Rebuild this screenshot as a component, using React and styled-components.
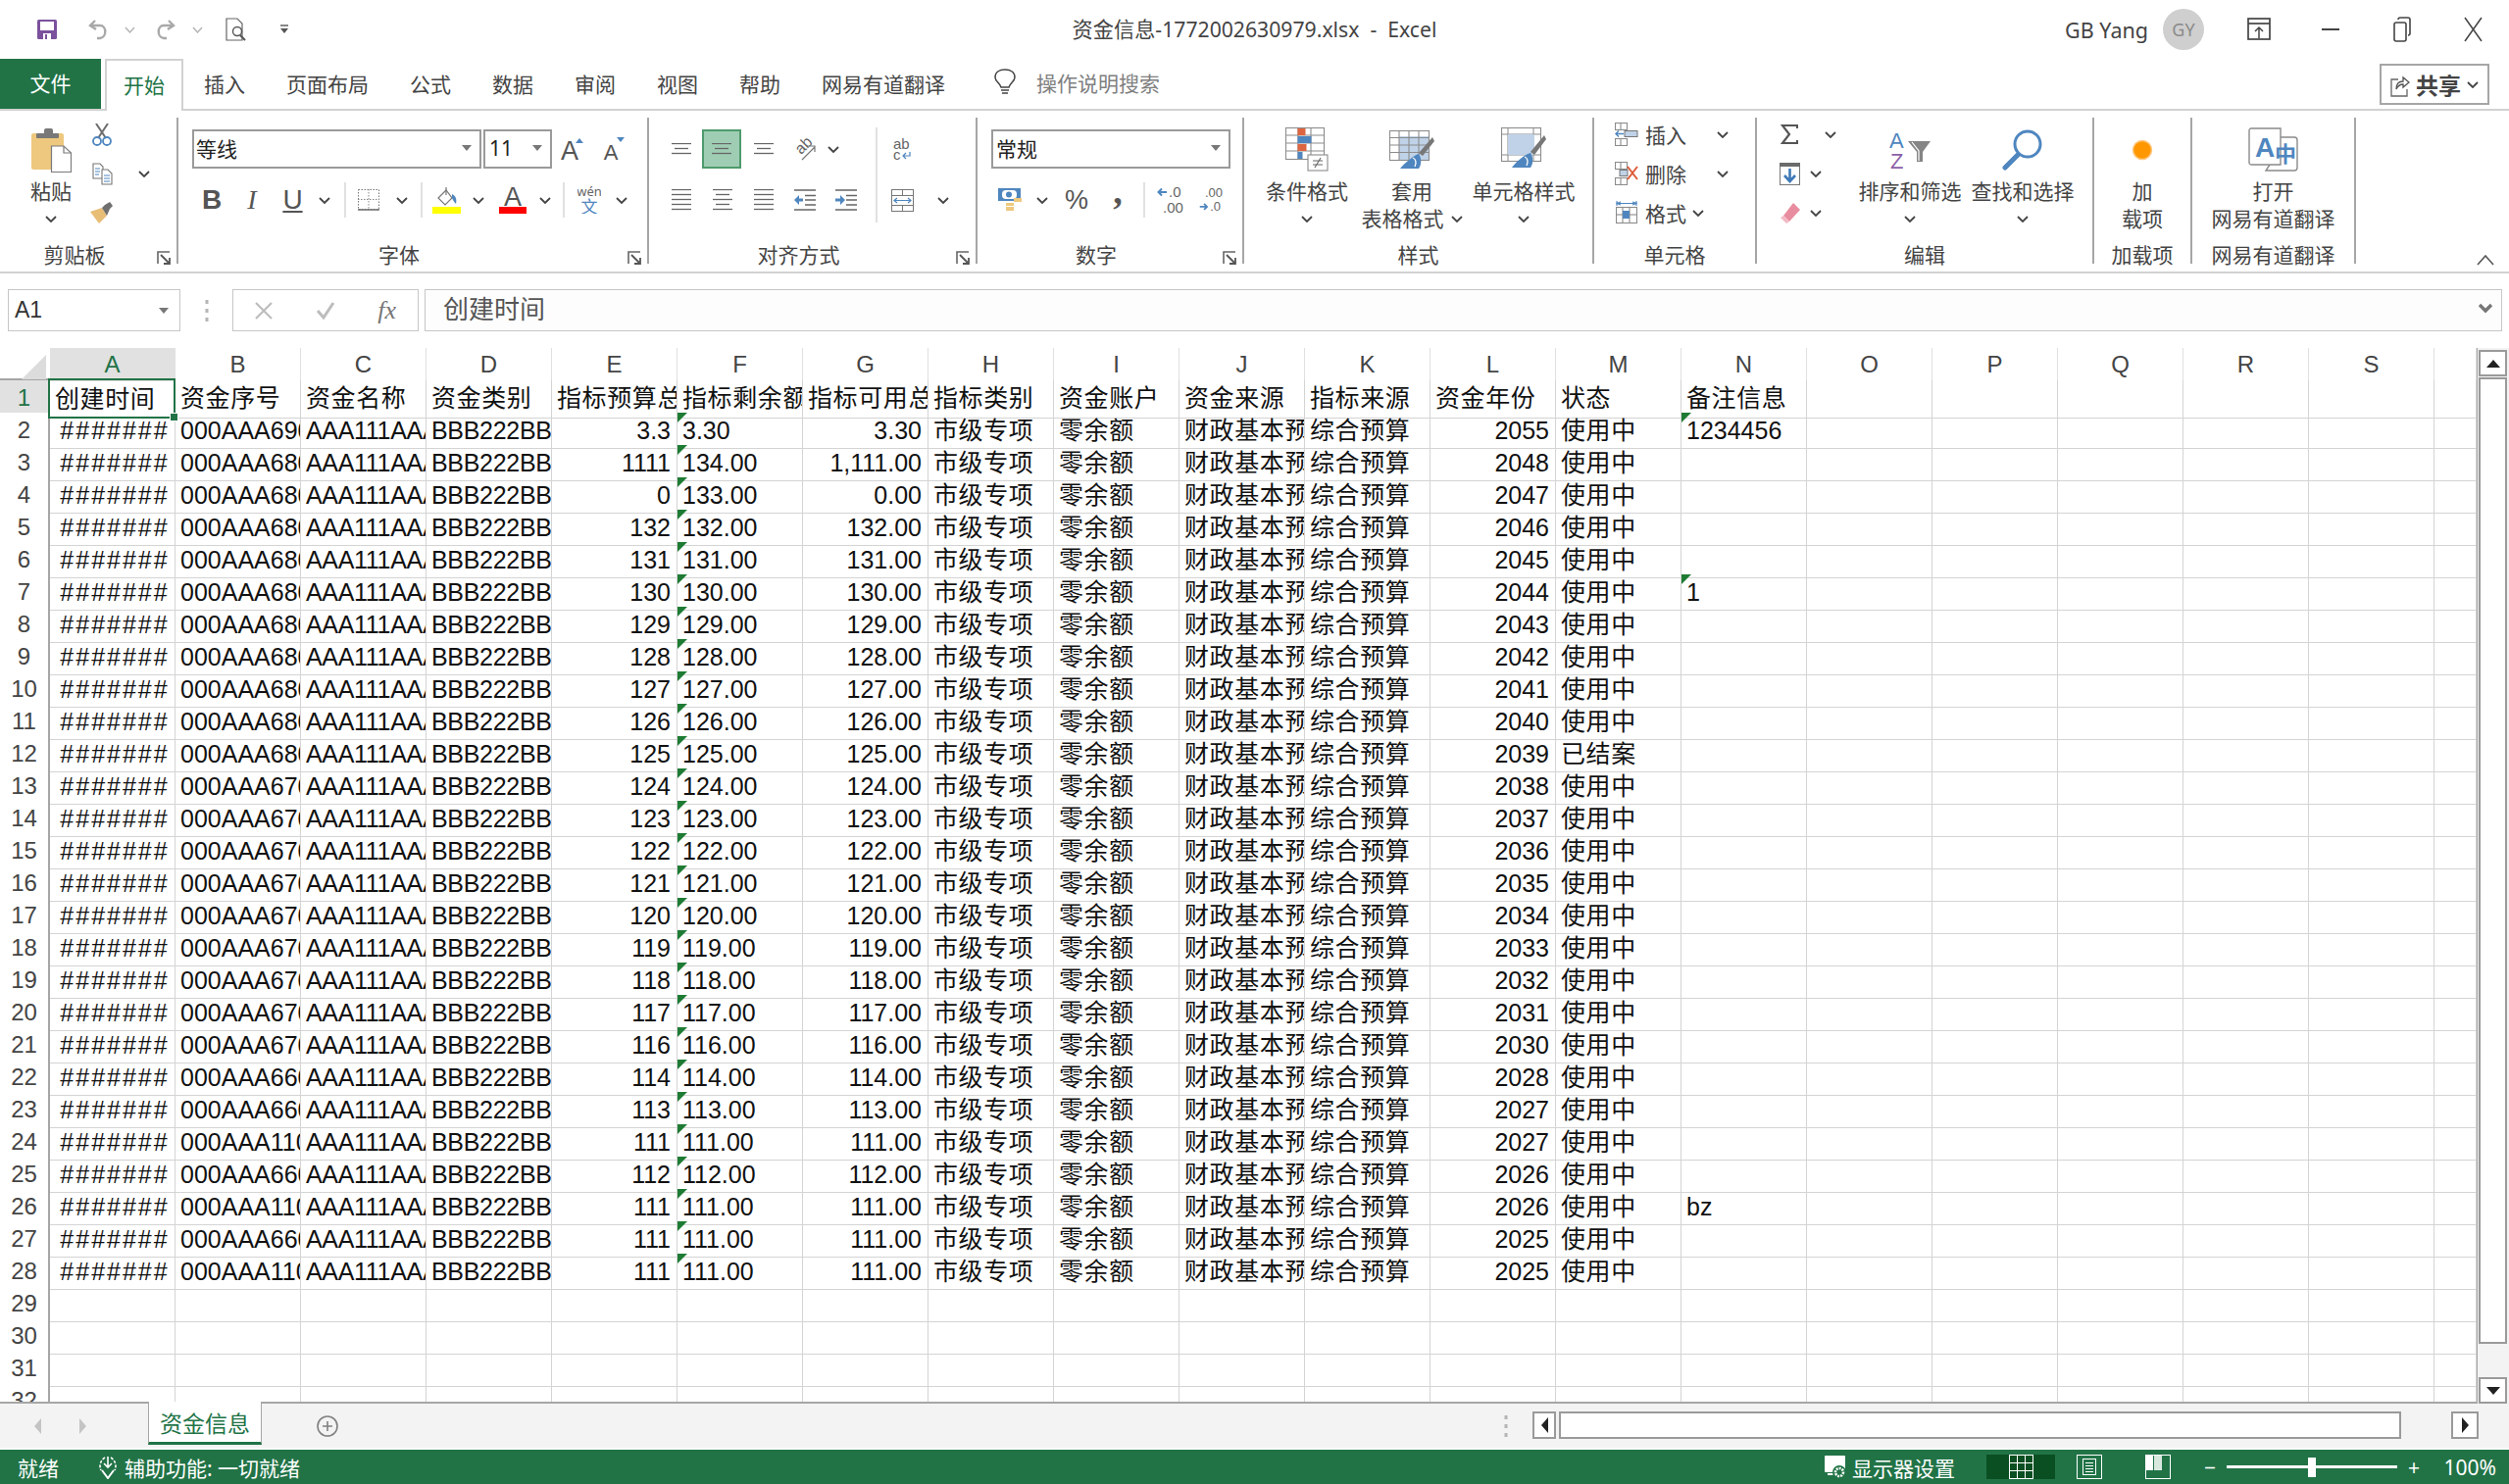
import React from 'react';
import styled, { createGlobalStyle } from 'styled-components';

const UI_FONT = `"Noto Sans", "Noto Sans CJK SC", sans-serif`;
const CELL_FONT = `"Liberation Sans", "Noto Sans CJK SC", sans-serif`;
const GREEN = '#217346';

const Global = createGlobalStyle`
  html, body { margin: 0; padding: 0; background: #fff; overflow: hidden; }
  * { box-sizing: border-box; }
`;

const Window = styled.div`
  width: 2559px;
  height: 1514px;
  display: flex;
  flex-direction: column;
  font-family: ${UI_FONT};
  font-size: 21px;
  color: #444;
  overflow: hidden;
`;

/* title bar */
const TitleBar = styled.div`
  height: 60px;
  display: grid;
  grid-template-columns: 1fr auto 1fr;
  align-items: center;
`;
const Qat = styled.div`
  display: flex;
  align-items: center;
  padding-left: 38px;
`;
const QatSlot = styled.div`
  width: ${p => p.$w}px;
  margin-left: ${p => p.$ml || 0}px;
  display: flex;
  justify-content: center;
`;
const DocTitle = styled.div`
  font-size: 21.2px;
  white-space: pre;
  color: #444;
  padding-bottom: 4px;
`;
const Account = styled.div`
  display: flex;
  align-items: center;
  justify-content: flex-end;
`;
const UserName = styled.span`
  font-size: 21.5px;
  margin-right: 15px;
`;
const Avatar = styled.div`
  width: 42px;
  height: 42px;
  border-radius: 50%;
  background: #cfcfcf;
  color: #8a8a8a;
  font-size: 18px;
  display: flex;
  align-items: center;
  justify-content: center;
  margin-right: 19px;
`;
const WinBtn = styled.div`
  width: 73px;
  height: 50px;
  display: flex;
  align-items: center;
  justify-content: center;
`;

/* tabs */
const TabRow = styled.div`
  height: 53px;
  display: flex;
  align-items: stretch;
  border-bottom: 2px solid #d2d2d2;
`;
const FileTab = styled.div`
  width: 103px;
  height: 51px;
  background: ${GREEN};
  color: #fff;
  display: flex;
  align-items: center;
  justify-content: center;
  padding-bottom: 3px;
  margin-right: 4px;
`;
const Tab = styled.div`
  padding: 0 21px 3px;
  height: 53px;
  display: flex;
  align-items: center;
  white-space: nowrap;
  ${p => p.$active && `
    width: 80px;
    padding: 0 0 3px;
    justify-content: center;
    color: ${GREEN};
    background: #fff;
    border: 2px solid #d2d2d2;
    border-bottom: 0;
  `}
`;
const Tell = styled.div`
  display: flex;
  align-items: center;
  gap: 21px;
  margin-left: 29px;
  color: #808080;
  padding-bottom: 3px;
`;
const ShareBtn = styled.div`
  margin-left: auto;
  margin-right: 20px;
  margin-top: 5px;
  width: 112px;
  height: 42px;
  border: 2px solid #a6a6a6;
  display: flex;
  align-items: center;
  justify-content: center;
  gap: 6px;
  font-weight: 700;
  font-size: 23px;
  color: #444;
`;

/* ribbon */
const Ribbon = styled.div`
  height: 166px;
  display: flex;
  padding-top: 7px;
  border-bottom: 2px solid #d2d2d2;
`;
const Group = styled.section`
  width: ${p => p.$w}px;
  height: 149px;
  border-right: 2px solid #a6a6a6;
  display: flex;
  flex-direction: column;
`;
const GroupBody = styled.div`
  height: 126px;
  flex: none;
  display: flex;
  padding-left: ${p => p.$pad || 0}px;
`;
const GroupFooter = styled.div`
  height: 28px;
  flex: none;
  line-height: 28px;
  display: flex;
  white-space: nowrap;
`;
const FooterLabel = styled.div`
  flex: 1;
  text-align: center;
`;
const Launcher = styled.div`
  width: 28px;
  display: flex;
  align-items: center;
  padding-left: 8px;
  padding-top: 6px;
`;
const Collapse = styled.div`
  flex: 1;
  display: flex;
  align-items: flex-end;
  justify-content: flex-end;
  padding: 0 15px 6px 0;
`;
const Stack = styled.div`
  display: flex;
  flex-direction: column;
  width: ${p => (p.$w ? `${p.$w}px` : 'auto')};
  margin-left: ${p => p.$ml || 0}px;
`;
const ToolRow = styled.div`
  display: flex;
  align-items: center;
  height: ${p => p.$h || 40}px;
  margin-top: ${p => p.$top || 0}px;
`;
const Slot = styled.div`
  width: ${p => p.$w}px;
  height: 100%;
  flex: none;
  display: flex;
  justify-content: center;
  align-items: center;
`;
const ActiveSlot = styled(Slot)`
  background: #9fcdb3;
  border: 2px solid #4e9a6c;
  margin-right: 2px;
`;
const Combo = styled.div`
  width: ${p => p.$w}px;
  height: 40px;
  margin-right: ${p => p.$mr || 0}px;
  border: 2px solid #9a9a9a;
  display: flex;
  align-items: center;
  justify-content: space-between;
  padding: 0 8px 2px ${p => p.$pl}px;
  font-size: 21px;
  color: #222;
`;
const Caret = styled.span`
  width: 0;
  height: 0;
  border-left: 5px solid transparent;
  border-right: 5px solid transparent;
  border-top: 6px solid #777;
`;
const Sep = styled.div`
  width: 2px;
  height: 36px;
  flex: none;
  background: #e1e1e1;
  margin-left: ${p => p.$ml || 0}px;
`;
const TallSep = styled(Sep)`
  height: 97px;
  margin-top: 10px;
`;
const Glyph = styled.span`
  font-family: "Liberation Serif", serif;
  font-size: 28px;
  color: #555;
  font-weight: ${p => (p.$b ? 700 : 400)};
  font-style: ${p => (p.$i ? 'italic' : 'normal')};
  text-decoration: ${p => (p.$u ? 'underline' : 'none')};
  line-height: 1;
`;
const SansGlyph = styled(Glyph)`
  font-family: "Liberation Sans", sans-serif;
  font-size: ${p => p.$size || 28}px;
`;
const CommaGlyph = styled(Glyph)`
  font-size: 38px;
  transform: translateY(-9px);
`;
const BigButton = styled.div`
  width: ${p => p.$w}px;
  flex: none;
  display: flex;
  flex-direction: column;
  align-items: center;
  padding-top: 10px;
`;
const BigIcon = styled.div`
  height: 46px;
  display: flex;
  align-items: center;
  justify-content: center;
  margin-bottom: 5px;
`;
const BigLine = styled.div`
  height: 28px;
  line-height: 28px;
  display: flex;
  align-items: center;
  gap: 7px;
  white-space: nowrap;
`;
const CellAction = styled.div`
  display: flex;
  align-items: center;
  height: 34px;
  margin-bottom: 6px;
`;
const ActionIcon = styled.div`
  width: ${p => p.$w || 26}px;
  display: flex;
  justify-content: center;
  margin-right: ${p => p.$mr ?? 6}px;
`;
const ActionChevron = styled.div`
  margin-left: ${p => p.$ml}px;
  display: flex;
`;

/* formula bar */
const FormulaBar = styled.div`
  height: 76px;
  padding: 16px 7px 17px 8px;
  display: flex;
  align-items: stretch;
`;
const NameBox = styled.div`
  width: 176px;
  border: 1.5px solid #c6c6c6;
  display: flex;
  align-items: center;
  justify-content: space-between;
  padding: 0 11px 0 6px;
  font-family: ${CELL_FONT};
  font-size: 23px;
  color: #333;
`;
const Grip = styled.div`
  width: 53px;
  display: flex;
  align-items: center;
  justify-content: center;
`;
const FxBox = styled.div`
  width: 190px;
  border: 1.5px solid #c6c6c6;
  display: flex;
  align-items: center;
  justify-content: space-between;
  padding: 0 22px;
  margin-right: 6px;
  color: #bbb;
`;
const FxText = styled.span`
  font-family: "Liberation Serif", serif;
  font-style: italic;
  font-size: 26px;
  color: #777;
`;
const FormulaInput = styled.div`
  flex: 1;
  border: 1.5px solid #c6c6c6;
  background: #fdfdfd;
  display: flex;
  align-items: center;
  justify-content: space-between;
  padding: 0 8px 5px 18px;
  font-size: 26px;
  color: #555;
`;

/* sheet */
const Main = styled.div`
  flex: 1;
  min-height: 0;
  display: flex;
`;
const Sheet = styled.div`
  width: 2527px;
  height: 1077px;
  overflow: hidden;
  border-bottom: 2px solid #a6a6a6;
  border-right: 1px solid #a6a6a6;
  font-family: ${CELL_FONT};
  font-size: 25px;
  color: #111;
`;
const HeaderRow = styled.div`
  display: grid;
  grid-template-columns: 51px repeat(19, 128px) 1fr;
  height: 33px;
  border-bottom: 2px solid #a6a6a6;
`;
const Corner = styled.div`
  display: flex;
  align-items: flex-end;
  justify-content: flex-end;
  padding: 0 4px 2px 0;
`;
const ColHead = styled.div`
  border-right: 1px solid #e0e0e0;
  text-align: center;
  line-height: 34px;
  font-size: 24px;
  color: ${p => (p.$active ? GREEN : '#444')};
  background: ${p => (p.$active ? '#e1e1e1' : '#fff')};
`;
const SheetRow = styled.div`
  display: grid;
  grid-template-columns: 51px repeat(19, 128px) 1fr;
  height: 33px;
`;
const RowHead = styled.div`
  border-right: 2px solid #a6a6a6;
  border-bottom: 1px solid #e8e8e8;
  text-align: center;
  line-height: 36px;
  font-size: 24px;
  color: ${p => (p.$active ? GREEN : '#444')};
  background: ${p => (p.$active ? '#e1e1e1' : '#fff')};
`;
const Cell = styled.div`
  position: relative;
  border-right: 1px solid #d4d4d4;
  border-bottom: 1px solid #d4d4d4;
  padding: 0 ${p => (p.$align === 'right' ? 6 : 0)}px 0 ${p => (p.$align === 'right' ? 0 : 5)}px;
  text-align: ${p => p.$align || 'left'};
  line-height: 37px;
  letter-spacing: ${p => p.$track || 0}px;
  white-space: nowrap;
  overflow: hidden;
`;
const Selected = styled(Cell)`
  overflow: visible;
  line-height: 38px;
`;
const SelectionBox = styled.div`
  position: absolute;
  left: -2px;
  right: -1px;
  top: -2px;
  bottom: -1px;
  border: 2.5px solid ${GREEN};
  z-index: 2;
`;
const FillHandle = styled.div`
  position: absolute;
  right: -5px;
  bottom: -5px;
  width: 9px;
  height: 9px;
  background: ${GREEN};
  border: 1px solid #fff;
`;
const ErrorFlag = styled.div`
  position: absolute;
  left: 0;
  top: 0;
  width: 10px;
  height: 10px;
  background: #1e7b34;
  clip-path: polygon(0 0, 100% 0, 0 100%);
`;
const VScroll = styled.div`
  width: 32px;
  background: #f3f3f3;
  display: flex;
  flex-direction: column;
  padding: 2px 2px 0 1px;
`;
const ArrowBtn = styled.div`
  width: 29px;
  height: 27px;
  flex: none;
  background: #fff;
  border: 2.5px solid #9a9a9a;
  display: flex;
  align-items: center;
  justify-content: center;
`;
const VThumb = styled.div`
  height: 986px;
  flex: none;
  margin: 1px 0 auto;
  background: #fff;
  border: 2.5px solid #9a9a9a;
`;
const Triangle = styled.span`
  width: 0;
  height: 0;
  border-left: 7px solid transparent;
  border-right: 7px solid transparent;
  ${p => (p.$dir === 'up' ? 'border-bottom: 8px solid #222;' : 'border-top: 8px solid #222;')}
`;
const SideTriangle = styled.span`
  width: 0;
  height: 0;
  border-top: 8px solid transparent;
  border-bottom: 8px solid transparent;
  ${p => (p.$dir === 'left'
    ? `border-right: 7px solid ${p.$color || '#222'};`
    : `border-left: 7px solid ${p.$color || '#222'};`)}
`;

/* sheet tabs */
const SheetBar = styled.div`
  height: 45px;
  flex: none;
  background: #f3f3f3;
  display: flex;
  align-items: flex-start;
  margin-bottom: 2px;
`;
const SheetNav = styled.div`
  width: 151px;
  height: 45px;
  display: flex;
  align-items: center;
  gap: 39px;
  padding-left: 35px;
`;
const SheetTab = styled.div`
  width: 116px;
  height: 44px;
  margin-top: -2px;
  background: #fff;
  border-left: 1.5px solid #a6a6a6;
  border-right: 1.5px solid #a6a6a6;
  border-bottom: 3px solid ${GREEN};
  color: ${GREEN};
  font-size: 23px;
  display: flex;
  align-items: center;
  justify-content: center;
`;
const AddSheet = styled.div`
  margin: 12px auto 0 56px;
  display: flex;
`;
const DotsSlot = styled.div`
  height: 45px;
  display: flex;
  align-items: center;
  margin-right: 25px;
`;
const HScroll = styled.div`
  width: 965px;
  height: 28px;
  margin: 8px 31px 0 0;
  display: flex;
  align-items: stretch;
`;
const HBtn = styled(ArrowBtn)`
  width: ${p => p.$w}px;
  height: 28px;
`;
const HThumb = styled.div`
  width: 859px;
  margin-left: 3px;
  background: #fff;
  border: 2.5px solid #9a9a9a;
  margin-right: auto;
`;

/* status bar */
const StatusBar = styled.div`
  height: 35px;
  flex: none;
  background: ${GREEN};
  color: #fff;
  display: flex;
  align-items: stretch;
  font-size: 21px;
  padding: 0 13px 0 18px;
`;
const StatusItem = styled.div`
  display: flex;
  align-items: center;
  gap: ${p => p.$gap || 0}px;
  margin-left: ${p => p.$ml || 0}px;
  white-space: nowrap;
`;
const StatusRight = styled(StatusItem)`
  margin-left: auto;
`;
const ViewBtn = styled.div`
  width: 70px;
  display: flex;
  align-items: center;
  justify-content: center;
  background: ${p => (p.$active ? '#0a4f22' : 'transparent')};
`;
const ZoomSign = styled.span`
  width: 14px;
  text-align: center;
`;
const ZoomTrack = styled.div`
  width: 174px;
  height: 3px;
  background: #fff;
  display: flex;
  align-items: center;
  justify-content: center;
  margin: 0 10px;
`;
const ZoomThumb = styled.div`
  width: 8px;
  height: 20px;
  background: #fff;
  flex: none;
`;
const ZoomValue = styled.div`
  width: 54px;
  margin-left: 23px;
  display: flex;
  align-items: center;
  justify-content: flex-end;
`;

/* icons */
const Ico = ({ w, h, children }) => (
  <svg width={w} height={h} viewBox={`0 0 ${w} ${h}`} fill="none">{children}</svg>
);
const Chev = () => (
  <Ico w={12} h={7}><polyline points="1,1 6,6 11,1" stroke="#444" strokeWidth="1.8" /></Ico>
);
const Launch = () => (
  <Ico w={15} h={15}>
    <path d="M13 1H1V13" stroke="#666" strokeWidth="1.6" />
    <path d="M4 4L13 13M13 7V13H7" stroke="#555" strokeWidth="1.8" />
  </Ico>
);
const LINE = '#666';
const Lines = ({ w = 20, ys, inset = [] }) => (
  <Ico w={w} h={Math.max(...ys) + 2}>
    {ys.map((y, i) => (
      <line key={y} x1={inset[i] || 0} x2={w - (inset[i] || 0)} y1={y + 0.5} y2={y + 0.5} stroke={LINE} strokeWidth="1.3" />
    ))}
  </Ico>
);
const SaveIcon = () => (
  <Ico w={20} h={20}>
    <rect width="20" height="20" rx="1.5" fill="#7b519d" />
    <rect x="3" y="2" width="14" height="9" fill="#fff" />
    <rect x="6" y="14" width="8" height="6" fill="#fff" />
    <rect x="8" y="15" width="2" height="5" fill="#7b519d" />
  </Ico>
);
const UndoIcon = ({ flip }) => (
  <Ico w={22} h={22}>
    <g transform={flip ? 'translate(22 0) scale(-1 1)' : undefined}>
      <path d="M8 2L3 7L9 11" stroke="#a9a9a9" strokeWidth="2.4" />
      <path d="M3 7H13C20 7 20 19 13 20H10" stroke="#a9a9a9" strokeWidth="2.4" />
    </g>
  </Ico>
);
const SmallChev = () => (
  <Ico w={11} h={7}><polyline points="1,1 5.5,6 10,1" stroke="#b5b5b5" strokeWidth="1.5" /></Ico>
);
const PreviewIcon = () => (
  <Ico w={23} h={24}>
    <path d="M1 1H12L17 6V23H1Z" stroke="#666" strokeWidth="1.2" />
    <circle cx="12" cy="14" r="4.5" stroke="#555" strokeWidth="1.4" />
    <line x1="15" y1="18" x2="20" y2="23" stroke="#555" strokeWidth="2" />
  </Ico>
);
const MoreIcon = () => (
  <Ico w={10} h={10}>
    <line x1="1" x2="9" y1="1" y2="1" stroke="#555" strokeWidth="1.4" />
    <path d="M1 4H9L5 9Z" fill="#555" />
  </Ico>
);
const BulbIcon = () => (
  <Ico w={22} h={28}>
    <path d="M7 19C6 15 1 13 1 9C1 4 5 1 11 1C17 1 21 4 21 9C21 13 16 15 15 19Z" stroke="#444" strokeWidth="1.5" />
    <path d="M7 22H15M8 25H14" stroke="#444" strokeWidth="1.6" />
  </Ico>
);
const ShareIcon = () => (
  <Ico w={20} h={25}>
    <path d="M8 7H1V24H17V17" stroke="#666" strokeWidth="1.3" />
    <path d="M6 17C6 11 9 9 13 9V5L19 10L13 15V12C10 12 8 13 6 17Z" stroke="#555" strokeWidth="1.3" />
  </Ico>
);
const RibbonOptsIcon = () => (
  <Ico w={24} h={24}>
    <rect x="1" y="1" width="22" height="21" stroke="#444" strokeWidth="1.7" />
    <line x1="1" x2="23" y1="6" y2="6" stroke="#444" strokeWidth="1.7" />
    <path d="M12 21V10M8 14L12 10L16 14" stroke="#444" strokeWidth="1.5" />
  </Ico>
);
const MinIcon = () => <Ico w={18} h={4}><line x1="0" x2="18" y1="2" y2="2" stroke="#444" strokeWidth="2" /></Ico>;
const RestoreIcon = () => (
  <Ico w={18} h={26}>
    <rect x="1" y="6" width="12" height="19" rx="2" stroke="#444" strokeWidth="1.6" />
    <path d="M5 3C5 1.5 6 1 7 1H15C16 1 17 2 17 3V17C17 18.5 16 19 15 19" stroke="#444" strokeWidth="1.6" />
  </Ico>
);
const CloseIcon = () => <Ico w={19} h={26}><path d="M1 1L18 25M18 1L1 25" stroke="#444" strokeWidth="1.5" /></Ico>;

const PasteIcon = () => (
  <Ico w={41} h={45}>
    <rect x="0" y="5" width="33" height="37" rx="2" fill="#edc87e" />
    <rect x="5" y="5" width="23" height="5" rx="1" fill="#787878" />
    <rect x="13" y="0" width="9" height="7" rx="2" fill="#787878" />
    <path d="M20.5 18H33L40.5 25V44.5H20.5Z" fill="#fff" stroke="#7a7a7a" strokeWidth="1.2" />
    <path d="M33 18V25H40.5" stroke="#7a7a7a" strokeWidth="1.2" />
  </Ico>
);
const CutIcon = () => (
  <Ico w={20} h={23}>
    <path d="M4 0L14 15M16 0L6 15" stroke="#6d6d6d" strokeWidth="2" />
    <circle cx="5" cy="18" r="4" stroke="#4f86bf" strokeWidth="1.8" />
    <circle cx="15" cy="18" r="4" stroke="#4f86bf" strokeWidth="1.8" />
  </Ico>
);
const CopyIcon = () => (
  <Ico w={21} h={23}>
    <path d="M1 1H8L11 4V16H1Z" fill="#fff" stroke="#777" strokeWidth="1.1" />
    <path d="M3 6H8M3 9H8M3 12H7" stroke="#4f86bf" strokeWidth="1.2" />
    <path d="M10 7H16L20 11V22H10Z" fill="#fff" stroke="#777" strokeWidth="1.1" />
    <path d="M12 13H18M12 16H18M12 19H18" stroke="#4f86bf" strokeWidth="1.2" />
  </Ico>
);
const BrushIcon = () => (
  <Ico w={24} h={22}>
    <path d="M0 10L12 6L17 14L9 22Z" fill="#e8bd76" />
    <path d="M12 6L15 3L20 0L23 4L20 7L17 14Z" fill="#6f6f6f" />
  </Ico>
);
const BorderIcon = () => (
  <Ico w={22} h={22}>
    <rect x="0.5" y="0.5" width="21" height="20" stroke="#777" strokeWidth="1" strokeDasharray="1.5 1.5" />
    <path d="M11 0V21M0 10.5H22" stroke="#888" strokeWidth="1" strokeDasharray="1.5 1.5" />
    <line x1="0" x2="22" y1="21" y2="21" stroke="#666" strokeWidth="1.4" />
  </Ico>
);
const FillIcon = () => (
  <Ico w={29} h={27}>
    <path d="M14 3L6 11L13 18L20 11Z" fill="#fff" stroke="#777" strokeWidth="1.2" />
    <path d="M14 0V8" stroke="#777" strokeWidth="1.2" />
    <path d="M20 7C24 9 25 12 24 17C22 15 21 13 20 11Z" fill="#4f86bf" />
    <rect x="0" y="20" width="29" height="7" fill="#ffff00" />
  </Ico>
);
const FontColorIcon = () => (
  <Ico w={28} h={28}>
    <text x="14" y="20" textAnchor="middle" fontFamily="Liberation Sans" fontSize="27" fill="#555">A</text>
    <rect x="0" y="21" width="28" height="7" fill="#ff0000" />
  </Ico>
);
const WenIcon = () => (
  <Ico w={24} h={28}>
    <text x="12" y="10" textAnchor="middle" fontFamily="Noto Sans" fontSize="13" fill="#666">wén</text>
    <text x="12" y="27" textAnchor="middle" fontFamily="Noto Sans CJK SC" fontSize="17" fill="#4f86bf">文</text>
  </Ico>
);
const GrowIcon = ({ down, size }) => (
  <Ico w={24} h={30}>
    <text x="9" y="26" textAnchor="middle" fontFamily="Liberation Sans" fontSize={size} fill="#555">A</text>
    {down
      ? <path d="M15 3H23L19 8Z" fill="#4f86bf" />
      : <path d="M15 9H23L19 4Z" fill="#4f86bf" />}
  </Ico>
);
const OrientIcon = () => (
  <Ico w={24} h={24}>
    <text x="4" y="15" transform="rotate(-45 10 12)" fontFamily="Liberation Sans" fontSize="16" fill="#666">ab</text>
    <path d="M9 23L22 10M16 9H22V15" stroke="#777" strokeWidth="1.2" />
  </Ico>
);
const IndentIcon = ({ right }) => (
  <Ico w={22} h={22}>
    <path d="M0 1H22M11 6.5H22M11 11H22M11 16H22M0 21H22" stroke={LINE} strokeWidth="1.3" />
    {right
      ? <path d="M0 9.5H5V6L10 11L5 16V12.5H0Z" fill="#4f86bf" />
      : <path d="M9 9.5H5V6L0 11L5 16V12.5H9Z" fill="#4f86bf" />}
  </Ico>
);
const WrapIcon = () => (
  <Ico w={20} h={23}>
    <text x="1" y="11" fontFamily="Liberation Sans" fontSize="15" fill="#666">ab</text>
    <text x="1" y="22" fontFamily="Liberation Sans" fontSize="15" fill="#666">c</text>
    <path d="M18 14V18H11M14 15L11 18L14 21" stroke="#4f86bf" strokeWidth="1.2" />
  </Ico>
);
const MergeIcon = () => (
  <Ico w={23} h={23}>
    <rect x="0.5" y="0.5" width="22" height="22" stroke="#777" strokeWidth="1" />
    <path d="M0 6.5H23M0 16.5H23M11.5 0V6.5M11.5 16.5V23" stroke="#777" strokeWidth="1" />
    <path d="M3 11.5H20M6 9L3 11.5L6 14M17 9L20 11.5L17 14" stroke="#4f86bf" strokeWidth="1.2" />
  </Ico>
);
const CurrencyIcon = () => (
  <Ico w={24} h={24}>
    <rect x="0" y="0" width="23" height="13" fill="#4f86bf" />
    <rect x="4" y="2" width="15" height="9" rx="4" fill="#fff" />
    <circle cx="11" cy="6.5" r="3" fill="#4f86bf" />
    <path d="M16 10H24V14H16ZM8 15H16V18H8ZM8 19H16V23H8Z" fill="#edc87e" />
  </Ico>
);
const IncDecIcon = ({ inc }) => (
  <Ico w={30} h={30}>
    <text x={inc ? 12 : 8} y="12" fontFamily="Liberation Sans" fontSize="15" fill="#666">{inc ? '.0' : '.00'}</text>
    <text x={inc ? 6 : 14} y="28" fontFamily="Liberation Sans" fontSize="15" fill="#666">{inc ? '.00' : '.0'}</text>
    {inc
      ? <path d="M10 7H2M5 3.5L1.5 7L5 10.5" stroke="#4f86bf" strokeWidth="2" />
      : <path d="M2 23H10M7 19.5L10.5 23L7 26.5" stroke="#4f86bf" strokeWidth="2" />}
  </Ico>
);
const GridBase = ({ x0 = 0, y0 = 0, w, h, cols, rows }) => (
  <g stroke="#8b8b8b" strokeWidth="1.1">
    <rect x={x0 + 0.5} y={y0 + 0.5} width={w} height={h} />
    {Array.from({ length: cols - 1 }, (_, i) => {
      const x = x0 + ((i + 1) * w) / cols;
      return <line key={`c${i}`} x1={x} x2={x} y1={y0} y2={y0 + h} />;
    })}
    {Array.from({ length: rows - 1 }, (_, i) => {
      const y = y0 + ((i + 1) * h) / rows;
      return <line key={`r${i}`} y1={y} y2={y} x1={x0} x2={x0 + w} />;
    })}
  </g>
);
const CondIcon = () => (
  <Ico w={44} h={46}>
    <GridBase w={39} h={32} cols={3} rows={4} />
    <rect x="12.5" y="1" width="8" height="7" fill="#dd6540" />
    <rect x="12.5" y="9" width="14" height="7" fill="#4f86bf" />
    <rect x="12.5" y="17" width="9" height="7" fill="#dd6540" />
    <rect x="12.5" y="25" width="5" height="7" fill="#4f86bf" />
    <rect x="23" y="28" width="20" height="16" fill="#fff" stroke="#8b8b8b" strokeWidth="1.1" />
    <path d="M28 34H38M28 38H38M36 31L30 41" stroke="#666" strokeWidth="1.1" />
  </Ico>
);
const TableStyleIcon = () => (
  <Ico w={46} h={46}>
    <rect x="10" y="9" width="30" height="24" fill="#bfd2e7" />
    <GridBase y0={3} w={40} h={30} cols={4} rows={4} />
    <path d="M44 10L46 14L34 29L30 26Z" fill="#777" />
    <path d="M30 27C25 28 14 38 11 42H30C33 38 33 31 30 27Z" fill="#4f86bf" />
    <path d="M24 31C27 32 28 36 26 40" stroke="#fff" strokeWidth="1.3" />
  </Ico>
);
const CellStyleIcon = () => (
  <Ico w={46} h={46}>
    <GridBase w={40} h={34} cols={1} rows={1} />
    <path d="M0 7H40M0 28H40M7 0V34M33 0V34" stroke="#8b8b8b" strokeWidth="1" />
    <rect x="7" y="7" width="27" height="21" fill="#bfd2e7" />
    <path d="M44 8L46 12L34 28L30 25Z" fill="#777" />
    <path d="M30 26C25 27 14 36 11 41H30C33 37 33 30 30 26Z" fill="#4f86bf" />
    <path d="M24 30C27 31 28 35 26 39" stroke="#fff" strokeWidth="1.3" />
  </Ico>
);
const InsertCellsIcon = () => (
  <Ico w={24} h={24}>
    <GridBase x0={0} y0={0} w={12} h={7} cols={2} rows={1} />
    <GridBase x0={0} y0={16} w={12} h={7} cols={2} rows={1} />
    <rect x="10" y="8.5" width="13" height="6" fill="#bfd2e7" stroke="#777" />
    <path d="M9 11.5H1M4 8.5L1 11.5L4 14.5" stroke="#4f86bf" strokeWidth="1.4" />
  </Ico>
);
const DeleteCellsIcon = () => (
  <Ico w={24} h={24}>
    <GridBase x0={0} y0={0} w={12} h={7} cols={2} rows={1} />
    <GridBase x0={0} y0={16} w={12} h={7} cols={2} rows={1} />
    <rect x="5" y="8.5" width="8" height="6" fill="#bfd2e7" stroke="#777" />
    <path d="M13 5L23 18M23 5L13 18" stroke="#dd5a37" strokeWidth="2" />
  </Ico>
);
const FormatCellsIcon = () => (
  <Ico w={22} h={25}>
    <path d="M1 2.5H21M1 0V5M21 0V5M5 1L1 2.5L5 4M17 1L21 2.5L17 4" stroke="#4f86bf" strokeWidth="1.1" />
    <GridBase x0={0} y0={6} w={21} h={16} cols={3} rows={2} />
    <rect x="7" y="10" width="7" height="8" fill="#4f86bf" />
  </Ico>
);
const SigmaIcon = () => (
  <Ico w={18} h={20}>
    <path d="M17 4V1H2L9 10L2 19H17V16" stroke="#555" strokeWidth="2.2" />
  </Ico>
);
const FillDownIcon = () => (
  <Ico w={21} h={23}>
    <rect x="0.5" y="0.5" width="20" height="22" fill="#fff" stroke="#777" />
    <rect x="0" y="0" width="21" height="4" fill="#6b6b6b" />
    <path d="M10.5 6V18M5 13L10.5 19L16 13" stroke="#3f7ab8" strokeWidth="2.6" />
  </Ico>
);
const EraserIcon = () => (
  <Ico w={21} h={21}>
    <path d="M14 0L21 7L10 19L4 13Z" fill="#e88da0" />
    <path d="M4 13L10 19L7 21L1 15Z" fill="#f2b9c4" />
  </Ico>
);
const SortIcon = () => (
  <Ico w={42} h={40}>
    <text x="0" y="18" fontFamily="Liberation Sans" fontSize="22" fill="#4f86bf">A</text>
    <text x="1" y="39" fontFamily="Liberation Sans" fontSize="22" fill="#8c5fa8">Z</text>
    <path d="M19 11H42L34 22V32H28V22Z" fill="#858585" />
    <path d="M23 12L30 21V31" stroke="#fff" strokeWidth="1.2" />
  </Ico>
);
const FindIcon = () => (
  <Ico w={42} h={42}>
    <circle cx="26" cy="15" r="13" stroke="#4f86bf" strokeWidth="3" />
    <line x1="16" y1="26" x2="3" y2="39" stroke="#4f86bf" strokeWidth="5" strokeLinecap="round" />
  </Ico>
);
const AddinIcon = () => (
  <Ico w={24} h={24}><circle cx="12" cy="12" r="9.5" fill="#ff9800" stroke="#ffc880" strokeWidth="1.5" /></Ico>
);
const YoudaoIcon = () => (
  <Ico w={51} h={46}>
    <path d="M26 10H47C49 10 50 11 50 13V41C50 43 49 44 47 44H18L22 38" fill="#fff" stroke="#8b8b8b" strokeWidth="1.4" />
    <path d="M3 1H33V38H3C2 38 1 37 1 36V3C1 2 2 1 3 1Z" fill="#fff" stroke="#8b8b8b" strokeWidth="1.4" />
    <text x="7" y="30" fontFamily="Liberation Sans" fontWeight="700" fontSize="28" fill="#4f86bf">A</text>
    <text x="27" y="35" fontFamily="Noto Sans CJK SC" fontWeight="700" fontSize="22" fill="#4f86bf">中</text>
  </Ico>
);
const CornerIcon = () => <Ico w={25} h={25}><path d="M25 0V25H0Z" fill="#dcdcdc" /></Ico>;
const GripIcon = () => (
  <Ico w={4} h={24}><path d="M2 1V5M2 10V14M2 19V23" stroke="#b5b5b5" strokeWidth="3" /></Ico>
);
const FxCancel = () => <Ico w={18} h={18}><path d="M1 1L17 17M17 1L1 17" stroke="#bdbdbd" strokeWidth="2.2" /></Ico>;
const FxOk = () => <Ico w={20} h={18}><path d="M2 9L8 16L18 1" stroke="#bdbdbd" strokeWidth="3" /></Ico>;
const BoldChev = () => <Ico w={16} h={11}><polyline points="2,2 8,8 14,2" stroke="#777" strokeWidth="3.4" /></Ico>;
const UpChev = () => <Ico w={18} h={11}><polyline points="1,10 9,1 17,10" stroke="#555" strokeWidth="1.6" /></Ico>;
const PlusCircle = () => (
  <Ico w={22} h={22}>
    <circle cx="11" cy="11" r="10" stroke="#808080" strokeWidth="1.6" />
    <path d="M11 6V16M6 11H16" stroke="#808080" strokeWidth="1.6" />
  </Ico>
);
const A11yIcon = () => (
  <Ico w={20} h={24}>
    <path d="M7 2C2 5 1 11 3 15M13 2C18 5 19 11 17 15" stroke="#fff" strokeWidth="1.6" strokeDasharray="3 1.5" />
    <path d="M10 1V11M6 8L10 12L14 8" stroke="#fff" strokeWidth="1.6" />
    <path d="M4 15L10 23L16 15" stroke="#fff" strokeWidth="2" />
  </Ico>
);
const DisplayIcon = () => (
  <Ico w={22} h={24}>
    <rect x="0" y="0" width="21" height="17" rx="1" fill="#fff" />
    <rect x="3" y="18" width="7" height="2" fill="#fff" />
    <circle cx="15" cy="17" r="7" fill={GREEN} />
    <circle cx="15" cy="17" r="4" stroke="#fff" strokeWidth="2.6" strokeDasharray="2 1" />
  </Ico>
);
const NormalViewIcon = () => (
  <Ico w={25} h={25}>
    <rect x="0.5" y="0.5" width="24" height="24" stroke="#fff" />
    <path d="M8.5 0V25M16.5 0V25M0 8.5H25M0 16.5H25" stroke="#fff" />
  </Ico>
);
const LayoutViewIcon = () => (
  <Ico w={26} h={25}>
    <rect x="0.5" y="0.5" width="25" height="24" stroke="#fff" />
    <rect x="6.5" y="4.5" width="13" height="16" stroke="#fff" />
    <path d="M9 8.5H17M9 11.5H17M9 14.5H17M9 17.5H17" stroke="#fff" />
  </Ico>
);
const BreakViewIcon = () => (
  <Ico w={26} h={25}>
    <rect x="0.5" y="0.5" width="25" height="24" stroke="#fff" />
    <rect x="1" y="1" width="7" height="15" fill="#fff" />
    <rect x="9" y="1" width="8" height="15" fill="#d8e8df" />
  </Ico>
);

/* data */
const COLS = 'ABCDEFGHIJKLMNOPQRS'.split('');
const HEADERS = ['创建时间', '资金序号', '资金名称', '资金类别', '指标预算总额', '指标剩余额度', '指标可用总额', '指标类别', '资金账户', '资金来源', '指标来源', '资金年份', '状态', '备注信息'];
const CODES = ['69', '68', '68', '68', '68', '68', '68', '68', '68', '68', '68', '67', '67', '67', '67', '67', '67', '67', '67', '67', '66', '66', '11', '66', '11', '66', '11'];
const DOWN = [132, 131, 130, 129, 128, 127, 126, 125, 124, 123, 122, 121, 120, 119, 118, 117, 116, 114, 113, 111, 112, 111, 111, 111];
const BUDGET = ['3.3', '1111', '0', ...DOWN.map(String)];
const REMAIN = ['3.30', '134.00', '133.00', ...DOWN.map(n => `${n}.00`)];
const AVAIL = ['3.30', '1,111.00', '0.00', ...DOWN.map(n => `${n}.00`)];
const YEARS = [2055, 2048, 2047, 2046, 2045, 2044, 2043, 2042, 2041, 2040, 2039, 2038, 2037, 2036, 2035, 2034, 2033, 2032, 2031, 2030, 2028, 2027, 2027, 2026, 2026, 2025, 2025];
const NOTES = { 2: '1234456', 7: '1', 26: 'bz' };
const FLAGGED_NOTES = [2, 7];
const BLANKS = Array.from({ length: 6 }, (_, i) => i);
const CJK_TRACK = 0.6;
const LATIN_TRACK = -0.3;

const DataRow = ({ row }) => {
  const i = row - 2;
  const note = NOTES[row];
  return (
    <SheetRow>
      <RowHead>{row}</RowHead>
      <Cell $align="center" $track={2}>#######</Cell>
      <Cell>{`000AAA${CODES[i]}0123`}</Cell>
      <Cell $track={LATIN_TRACK}>AAA111AAA111</Cell>
      <Cell $track={LATIN_TRACK}>BBB222BBB222</Cell>
      <Cell $align="right">{BUDGET[i]}</Cell>
      <Cell><ErrorFlag />{REMAIN[i]}</Cell>
      <Cell $align="right">{AVAIL[i]}</Cell>
      <Cell $track={CJK_TRACK}>市级专项</Cell>
      <Cell $track={CJK_TRACK}>零余额</Cell>
      <Cell $track={CJK_TRACK}>财政基本预算</Cell>
      <Cell $track={CJK_TRACK}>综合预算</Cell>
      <Cell $align="right">{YEARS[i]}</Cell>
      <Cell $track={CJK_TRACK}>{row === 12 ? '已结案' : '使用中'}</Cell>
      <Cell>{FLAGGED_NOTES.includes(row) && <ErrorFlag />}{note}</Cell>
      {BLANKS.map(b => <Cell key={b} />)}
    </SheetRow>
  );
};

const EmptyRow = ({ row }) => (
  <SheetRow>
    <RowHead>{row}</RowHead>
    {Array.from({ length: 20 }, (_, i) => <Cell key={i} />)}
  </SheetRow>
);

const Big = ({ w, icon, lines }) => (
  <BigButton $w={w}>
    <BigIcon>{icon}</BigIcon>
    {lines.map((l, i) => <BigLine key={i}>{l}</BigLine>)}
  </BigButton>
);

export default function App() {
  return (
    <Window>
      <Global />
      <TitleBar>
        <Qat>
          <QatSlot $w={20}><SaveIcon /></QatSlot>
          <QatSlot $w={24} $ml={30}><UndoIcon /></QatSlot>
          <QatSlot $w={12} $ml={14}><SmallChev /></QatSlot>
          <QatSlot $w={24} $ml={19}><UndoIcon flip /></QatSlot>
          <QatSlot $w={12} $ml={14}><SmallChev /></QatSlot>
          <QatSlot $w={24} $ml={22}><PreviewIcon /></QatSlot>
          <QatSlot $w={10} $ml={32}><MoreIcon /></QatSlot>
        </Qat>
        <DocTitle>{'资金信息-1772002630979.xlsx  -  Excel'}</DocTitle>
        <Account>
          <UserName>GB Yang</UserName>
          <Avatar>GY</Avatar>
          <WinBtn><RibbonOptsIcon /></WinBtn>
          <WinBtn><MinIcon /></WinBtn>
          <WinBtn><RestoreIcon /></WinBtn>
          <WinBtn><CloseIcon /></WinBtn>
        </Account>
      </TitleBar>

      <TabRow>
        <FileTab>文件</FileTab>
        <Tab $active>开始</Tab>
        {['插入', '页面布局', '公式', '数据', '审阅', '视图', '帮助', '网易有道翻译'].map(t => <Tab key={t}>{t}</Tab>)}
        <Tell><BulbIcon />操作说明搜索</Tell>
        <ShareBtn><ShareIcon />共享<Chev /></ShareBtn>
      </TabRow>

      <Ribbon>
        <Group $w={182}>
          <GroupBody $pad={30}>
            <Big w={44} icon={<PasteIcon />} lines={['粘贴', <Chev key="c" />]} />
            <Stack $w={40} $ml={10}>
              <ToolRow $h={34}><Slot $w={40}><CutIcon /></Slot></ToolRow>
              <ToolRow $h={34} $top={6}><Slot $w={40}><CopyIcon /></Slot></ToolRow>
              <ToolRow $h={34} $top={6}><Slot $w={40}><BrushIcon /></Slot></ToolRow>
            </Stack>
            <Stack $w={46}>
              <ToolRow $h={34} $top={40}><Slot $w={46}><Chev /></Slot></ToolRow>
            </Stack>
          </GroupBody>
          <GroupFooter><FooterLabel>剪贴板</FooterLabel><Launcher><Launch /></Launcher></GroupFooter>
        </Group>

        <Group $w={480}>
          <GroupBody $pad={14}>
            <Stack>
              <ToolRow $top={12}>
                <Combo $w={295} $mr={2} $pl={2}>等线<Caret /></Combo>
                <Combo $w={70} $pl={4}>11<Caret /></Combo>
                <Slot $w={42}><GrowIcon size={27} /></Slot>
                <Slot $w={42}><GrowIcon down size={22} /></Slot>
              </ToolRow>
              <ToolRow $h={36} $top={14}>
                <Slot $w={40}><SansGlyph $b>B</SansGlyph></Slot>
                <Slot $w={42}><Glyph $i>I</Glyph></Slot>
                <Slot $w={41}><SansGlyph $u>U</SansGlyph></Slot>
                <Slot $w={24}><Chev /></Slot>
                <Sep $ml={8} />
                <Slot $w={46}><BorderIcon /></Slot>
                <Slot $w={22}><Chev /></Slot>
                <Sep $ml={8} />
                <Slot $w={48}><FillIcon /></Slot>
                <Slot $w={18}><Chev /></Slot>
                <Slot $w={52}><FontColorIcon /></Slot>
                <Slot $w={14}><Chev /></Slot>
                <Sep $ml={11} />
                <Slot $w={50}><WenIcon /></Slot>
                <Slot $w={16}><Chev /></Slot>
              </ToolRow>
            </Stack>
          </GroupBody>
          <GroupFooter><FooterLabel>字体</FooterLabel><Launcher><Launch /></Launcher></GroupFooter>
        </Group>

        <Group $w={335}>
          <GroupBody $pad={12}>
            <Stack $w={207}>
              <ToolRow $top={12}>
                <Slot $w={42}><Lines ys={[0, 5, 10]} inset={[0, 3, 0]} /></Slot>
                <ActiveSlot $w={40}><Lines ys={[0, 5, 10]} inset={[0, 3, 0]} /></ActiveSlot>
                <Slot $w={42}><Lines ys={[0, 5, 10]} inset={[0, 3, 0]} /></Slot>
                <Slot $w={42}><OrientIcon /></Slot>
                <Slot $w={16}><Chev /></Slot>
              </ToolRow>
              <ToolRow $h={36} $top={14}>
                <Slot $w={42}><Lines ys={[0, 5, 10, 15, 20]} /></Slot>
                <Slot $w={42}><Lines ys={[0, 5, 10, 15, 20]} inset={[0, 3, 0, 3, 0]} /></Slot>
                <Slot $w={42}><Lines ys={[0, 5, 10, 15, 20]} /></Slot>
                <Slot $w={42}><IndentIcon /></Slot>
                <Slot $w={42}><IndentIcon right /></Slot>
              </ToolRow>
            </Stack>
            <TallSep $ml={12} />
            <Stack>
              <ToolRow $top={12}><Slot $w={50}><WrapIcon /></Slot></ToolRow>
              <ToolRow $h={36} $top={14}>
                <Slot $w={50}><MergeIcon /></Slot>
                <Slot $w={34}><Chev /></Slot>
              </ToolRow>
            </Stack>
          </GroupBody>
          <GroupFooter><FooterLabel>对齐方式</FooterLabel><Launcher><Launch /></Launcher></GroupFooter>
        </Group>

        <Group $w={272}>
          <GroupBody $pad={14}>
            <Stack>
              <ToolRow $top={12}><Combo $w={244} $pl={3}>常规<Caret /></Combo></ToolRow>
              <ToolRow $h={36} $top={14}>
                <Slot $w={38}><CurrencyIcon /></Slot>
                <Slot $w={28}><Chev /></Slot>
                <Slot $w={42}><SansGlyph $size={27}>%</SansGlyph></Slot>
                <Slot $w={42}><CommaGlyph $b>,</CommaGlyph></Slot>
                <Sep $ml={5} />
                <Slot $w={54}><IncDecIcon inc /></Slot>
                <Slot $w={26}><IncDecIcon /></Slot>
              </ToolRow>
            </Stack>
          </GroupBody>
          <GroupFooter><FooterLabel>数字</FooterLabel><Launcher><Launch /></Launcher></GroupFooter>
        </Group>

        <Group $w={357}>
          <GroupBody $pad={11}>
            <Big w={106} icon={<CondIcon />} lines={['条件格式', <Chev key="c" />]} />
            <Big w={108} icon={<TableStyleIcon />} lines={['套用', <React.Fragment key="t">表格格式<Chev /></React.Fragment>]} />
            <Big w={120} icon={<CellStyleIcon />} lines={['单元格样式', <Chev key="c" />]} />
          </GroupBody>
          <GroupFooter><FooterLabel>样式</FooterLabel></GroupFooter>
        </Group>

        <Group $w={166}>
          <GroupBody $pad={20}>
            <Stack>
              <CellAction><ActionIcon><InsertCellsIcon /></ActionIcon>插入<ActionChevron $ml={31}><Chev /></ActionChevron></CellAction>
              <CellAction><ActionIcon><DeleteCellsIcon /></ActionIcon>删除<ActionChevron $ml={31}><Chev /></ActionChevron></CellAction>
              <CellAction><ActionIcon><FormatCellsIcon /></ActionIcon>格式<ActionChevron $ml={6}><Chev /></ActionChevron></CellAction>
            </Stack>
          </GroupBody>
          <GroupFooter><FooterLabel>单元格</FooterLabel></GroupFooter>
        </Group>

        <Group $w={344}>
          <GroupBody $pad={22}>
            <Stack $w={79}>
              <CellAction><ActionIcon $w={22} $mr={0}><SigmaIcon /></ActionIcon><ActionChevron $ml={25}><Chev /></ActionChevron></CellAction>
              <CellAction><ActionIcon $w={22} $mr={0}><FillDownIcon /></ActionIcon><ActionChevron $ml={10}><Chev /></ActionChevron></CellAction>
              <CellAction><ActionIcon $w={22} $mr={0}><EraserIcon /></ActionIcon><ActionChevron $ml={10}><Chev /></ActionChevron></CellAction>
            </Stack>
            <Big w={110} icon={<SortIcon />} lines={['排序和筛选', <Chev key="c" />]} />
            <Big w={120} icon={<FindIcon />} lines={['查找和选择', <Chev key="c" />]} />
          </GroupBody>
          <GroupFooter><FooterLabel>编辑</FooterLabel></GroupFooter>
        </Group>

        <Group $w={100}>
          <GroupBody>
            <Big w={98} icon={<AddinIcon />} lines={['加', '载项']} />
          </GroupBody>
          <GroupFooter><FooterLabel>加载项</FooterLabel></GroupFooter>
        </Group>

        <Group $w={167}>
          <GroupBody>
            <Big w={165} icon={<YoudaoIcon />} lines={['打开', '网易有道翻译']} />
          </GroupBody>
          <GroupFooter><FooterLabel>网易有道翻译</FooterLabel></GroupFooter>
        </Group>

        <Collapse><UpChev /></Collapse>
      </Ribbon>

      <FormulaBar>
        <NameBox>A1<Caret /></NameBox>
        <Grip><GripIcon /></Grip>
        <FxBox><FxCancel /><FxOk /><FxText>fx</FxText></FxBox>
        <FormulaInput>创建时间<BoldChev /></FormulaInput>
      </FormulaBar>

      <Main>
        <Sheet>
          <HeaderRow>
            <Corner><CornerIcon /></Corner>
            {COLS.map(c => <ColHead key={c} $active={c === 'A'}>{c}</ColHead>)}
            <ColHead />
          </HeaderRow>
          <SheetRow>
            <RowHead $active>1</RowHead>
            <Selected $track={CJK_TRACK}>
              创建时间
              <SelectionBox><FillHandle /></SelectionBox>
            </Selected>
            {HEADERS.slice(1).map(h => <Cell key={h} $track={CJK_TRACK}>{h}</Cell>)}
            {BLANKS.map(b => <Cell key={b} />)}
          </SheetRow>
          {CODES.map((_, i) => <DataRow key={i} row={i + 2} />)}
          {[29, 30, 31, 32].map(r => <EmptyRow key={r} row={r} />)}
        </Sheet>
        <VScroll>
          <ArrowBtn><Triangle $dir="up" /></ArrowBtn>
          <VThumb />
          <ArrowBtn><Triangle $dir="down" /></ArrowBtn>
        </VScroll>
      </Main>

      <SheetBar>
        <SheetNav>
          <SideTriangle $dir="left" $color="#c4c4c4" />
          <SideTriangle $dir="right" $color="#c4c4c4" />
        </SheetNav>
        <SheetTab>资金信息</SheetTab>
        <AddSheet><PlusCircle /></AddSheet>
        <DotsSlot><GripIcon /></DotsSlot>
        <HScroll>
          <HBtn $w={24}><SideTriangle $dir="left" /></HBtn>
          <HThumb />
          <HBtn $w={28}><SideTriangle $dir="right" /></HBtn>
        </HScroll>
      </SheetBar>

      <StatusBar>
        <StatusItem>就绪</StatusItem>
        <StatusItem $ml={40} $gap={7}><A11yIcon />辅助功能: 一切就绪</StatusItem>
        <StatusRight $gap={6}><DisplayIcon />显示器设置</StatusRight>
        <StatusItem $ml={32}>
          <ViewBtn $active><NormalViewIcon /></ViewBtn>
          <ViewBtn><LayoutViewIcon /></ViewBtn>
          <ViewBtn><BreakViewIcon /></ViewBtn>
        </StatusItem>
        <StatusItem $ml={11}>
          <ZoomSign>−</ZoomSign><ZoomTrack><ZoomThumb /></ZoomTrack><ZoomSign>+</ZoomSign>
        </StatusItem>
        <ZoomValue>100%</ZoomValue>
      </StatusBar>
    </Window>
  );
}
